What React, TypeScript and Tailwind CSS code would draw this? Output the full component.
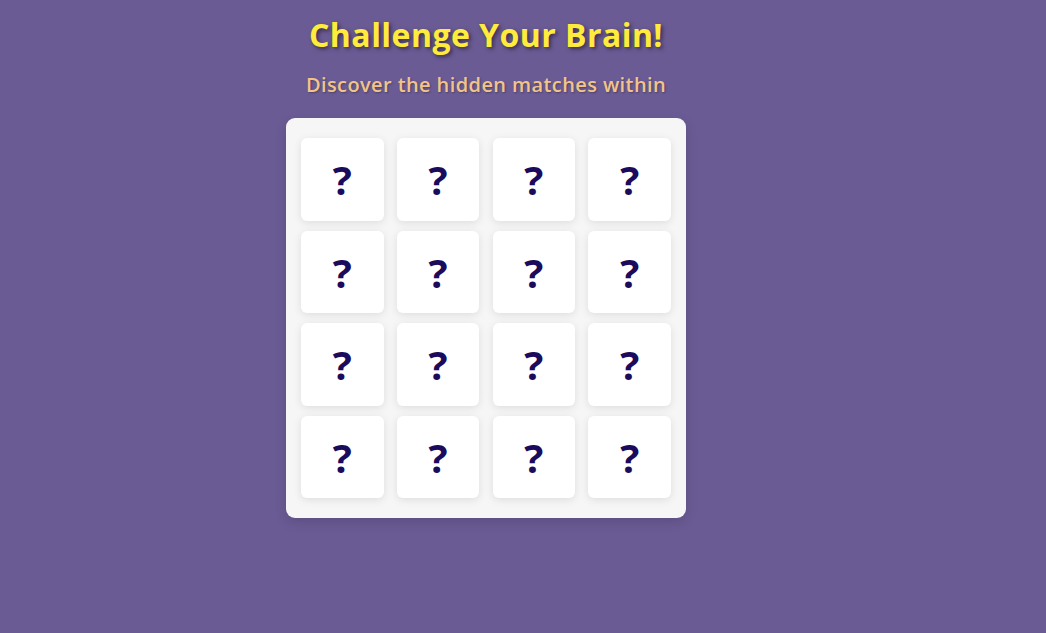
const cards = Array.from({ length: 16 }, (_, i) => i);

const Card = () => {
  return (
    <div className="h-[82.5px] bg-white rounded-[6px] shadow-[0_2px_8px_rgba(0,0,0,0.1)] grid place-items-center">
      <span className="text-[40px] leading-none font-bold text-[#1b0b5c] pt-[2px]">?</span>
    </div>
  );
};

const App = () => {
  return (
    <div className="w-full h-screen bg-[#6b5b95] font-['Open_Sans',sans-serif]">
      <div className="w-[972px] flex flex-col items-center pt-[13px]">
        <h1 className="text-[32px] leading-[44px] font-bold tracking-[0.45px] text-[#ffeb3b] [text-shadow:2px_2px_4px_rgba(0,0,0,0.5)]">
          Challenge Your Brain!
        </h1>
        <p className="mt-[13px] text-[20px] leading-[30px] font-semibold tracking-[0.4px] text-[#f2c48a] [text-shadow:1px_1px_2px_rgba(0,0,0,0.3)]">
          Discover the hidden matches within
        </p>
        <div className="mt-[18px] w-[400px] bg-[#f6f6f6] rounded-[9px] px-[15px] py-[20px] grid grid-cols-4 gap-x-[13.33px] gap-y-[10px] shadow-[0_4px_12px_rgba(0,0,0,0.15)]">
          {cards.map((c) => (
            <Card key={c} />
          ))}
        </div>
      </div>
    </div>
  );
};

export default App;
